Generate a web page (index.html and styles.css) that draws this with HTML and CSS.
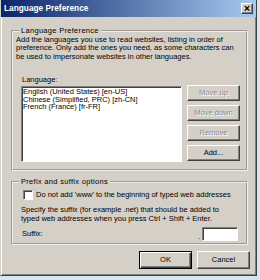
FILE: index.html
```html
<!DOCTYPE html>
<html lang="en">
<head>
    <meta charset="UTF-8">
    <title>Language Preference</title>
    <link rel="stylesheet" href="styles.css">
</head>
<body>
    <div class="window">
        <div class="titlebar">
            <span class="title">Language Preference</span>
            <span class="close">&times;</span>
        </div>
        <div class="content">
            <fieldset class="group lang-group">
                <legend>Language Preference</legend>
                <p class="intro">Add the languages you use to read websites, listing in order of<br>preference. Only add the ones you need, as some characters can<br>be used to impersonate websites in other languages.</p>
                <div class="lang-row">
                    <div class="lang-col">
                        <div class="field-label">Language:</div>
                        <ul class="listbox">
                            <li>English (United States) [en-US]</li>
                            <li>Chinese (Simplified, PRC) [zh-CN]</li>
                            <li>French (France) [fr-FR]</li>
                        </ul>
                    </div>
                    <div class="side-buttons">
                        <button class="btn" disabled>Move up</button>
                        <button class="btn" disabled>Move down</button>
                        <button class="btn" disabled>Remove</button>
                        <button class="btn">Add...</button>
                    </div>
                </div>
            </fieldset>

            <fieldset class="group suffix-group">
                <legend>Prefix and suffix options</legend>
                <div class="check-row">
                    <span class="checkbox"></span>
                    <span>Do not add 'www' to the beginning of typed web addresses</span>
                </div>
                <p class="hint">Specify the suffix (for example .net) that should be added to<br>typed web addresses when you press Ctrl + Shift + Enter.</p>
                <div class="suffix-row">
                    <span class="suffix-label">Suffix:</span>
                    <span class="dot">.</span>
                    <span class="textbox"></span>
                </div>
            </fieldset>

            <div class="actions">
                <button class="btn default">OK</button>
                <button class="btn">Cancel</button>
            </div>
        </div>
    </div>
</body>
</html>
```

FILE: styles.css
```css
body {
    margin: 0;
    padding: 0;
    background: #d6e4f3;
    font-family: "Liberation Sans", Arial, sans-serif;
    font-size: 7.5px;
    line-height: 8.3px;
    color: #000;
    white-space: nowrap;
}

.window {
    width: 257px;
    height: 276px;
    box-sizing: border-box;
    background: #d4d0c8;
    border-left: 1px solid #d4d0c8;
    border-right: 1px solid #404040;
    border-bottom: 1px solid #404040;
    box-shadow: inset 1px 0 #fff, inset -1px -1px #808080;
    padding: 0 2px 2px 2px;
}

.titlebar {
    height: 17px;
    margin: 0 -2px;
    padding: 0 3px;
    display: flex;
    align-items: center;
    justify-content: space-between;
    background: linear-gradient(to right, #0a246a, #a6caf0);
}

.title {
    color: #fff;
    font-weight: bold;
    font-size: 8.3px;
}

.close {
    width: 12px;
    height: 11px;
    box-sizing: border-box;
    background: #d4d0c8;
    border: 1px solid;
    border-color: #fff #404040 #404040 #fff;
    box-shadow: inset -1px -1px #808080;
    font-weight: bold;
    font-size: 11px;
    line-height: 8px;
    text-align: center;
}

.content {
    padding: 0 6px 0 8px;
}

.group {
    margin: 0;
    border: 2px groove #f0eee8;
    padding: 1px 4px 7px 3px;
}

.group legend {
    padding: 0 2px;
    margin-left: 3px;
    line-height: 9px;
    letter-spacing: 0.3px;
}

.lang-group {
    margin-top: 9px;
}

.intro {
    margin: 0;
}

.lang-row {
    display: flex;
    margin-top: 15px;
    padding-left: 5px;
}

.field-label {
    margin-left: 1px;
}

.listbox {
    list-style: none;
    margin: 2px 0 0 0;
    padding: 1px 1px;
    width: 161px;
    height: 76px;
    box-sizing: border-box;
    background: #fff;
    border: 1px solid;
    border-color: #808080 #fff #fff #808080;
    box-shadow: inset 1px 1px #404040;
}

.listbox li {
    line-height: 7.6px;
}

.side-buttons {
    display: flex;
    flex-direction: column;
    gap: 4px;
    margin-left: 5px;
    padding-top: 9px;
}

.btn {
    font: inherit;
    line-height: 1;
    width: 53px;
    height: 16px;
    padding: 0;
    color: #000;
    background: #d4d0c8;
    border: 1px solid;
    border-color: #fff #404040 #404040 #fff;
    box-shadow: inset -1px -1px #808080;
}

.btn:disabled {
    color: #8a8a8a;
    text-shadow: 1px 1px #fff;
}

.suffix-group {
    margin-top: 6px;
    padding-top: 4px;
    padding-bottom: 2px;
}

.check-row {
    display: flex;
    align-items: center;
    gap: 3px;
    padding-left: 7px;
}

.checkbox {
    width: 10px;
    height: 10px;
    box-sizing: border-box;
    background: #fff;
    border: 1px solid;
    border-color: #808080 #fff #fff #808080;
    box-shadow: inset 1px 1px #404040;
}

.hint {
    margin: 5px 0 0 0;
    padding-left: 5px;
    line-height: 9px;
}

.suffix-row {
    display: flex;
    align-items: center;
    padding-left: 6px;
    margin-top: 4px;
}

.dot {
    margin-left: auto;
    margin-right: 2px;
    align-self: flex-end;
}

.textbox {
    width: 36px;
    height: 14px;
    box-sizing: border-box;
    background: #fff;
    border: 1px solid;
    border-color: #808080 #fff #fff #808080;
    box-shadow: inset 1px 1px #404040;
    margin-right: 4px;
}

.actions {
    display: flex;
    justify-content: flex-end;
    gap: 5px;
    margin-top: 6px;
    margin-right: -2px;
}

.actions .btn {
    height: 18px;
}

.btn.default {
    border: 1px solid #000;
    box-shadow: inset 1px 1px #fff, inset -1px -1px #404040, inset -2px -2px #808080;
}
```
